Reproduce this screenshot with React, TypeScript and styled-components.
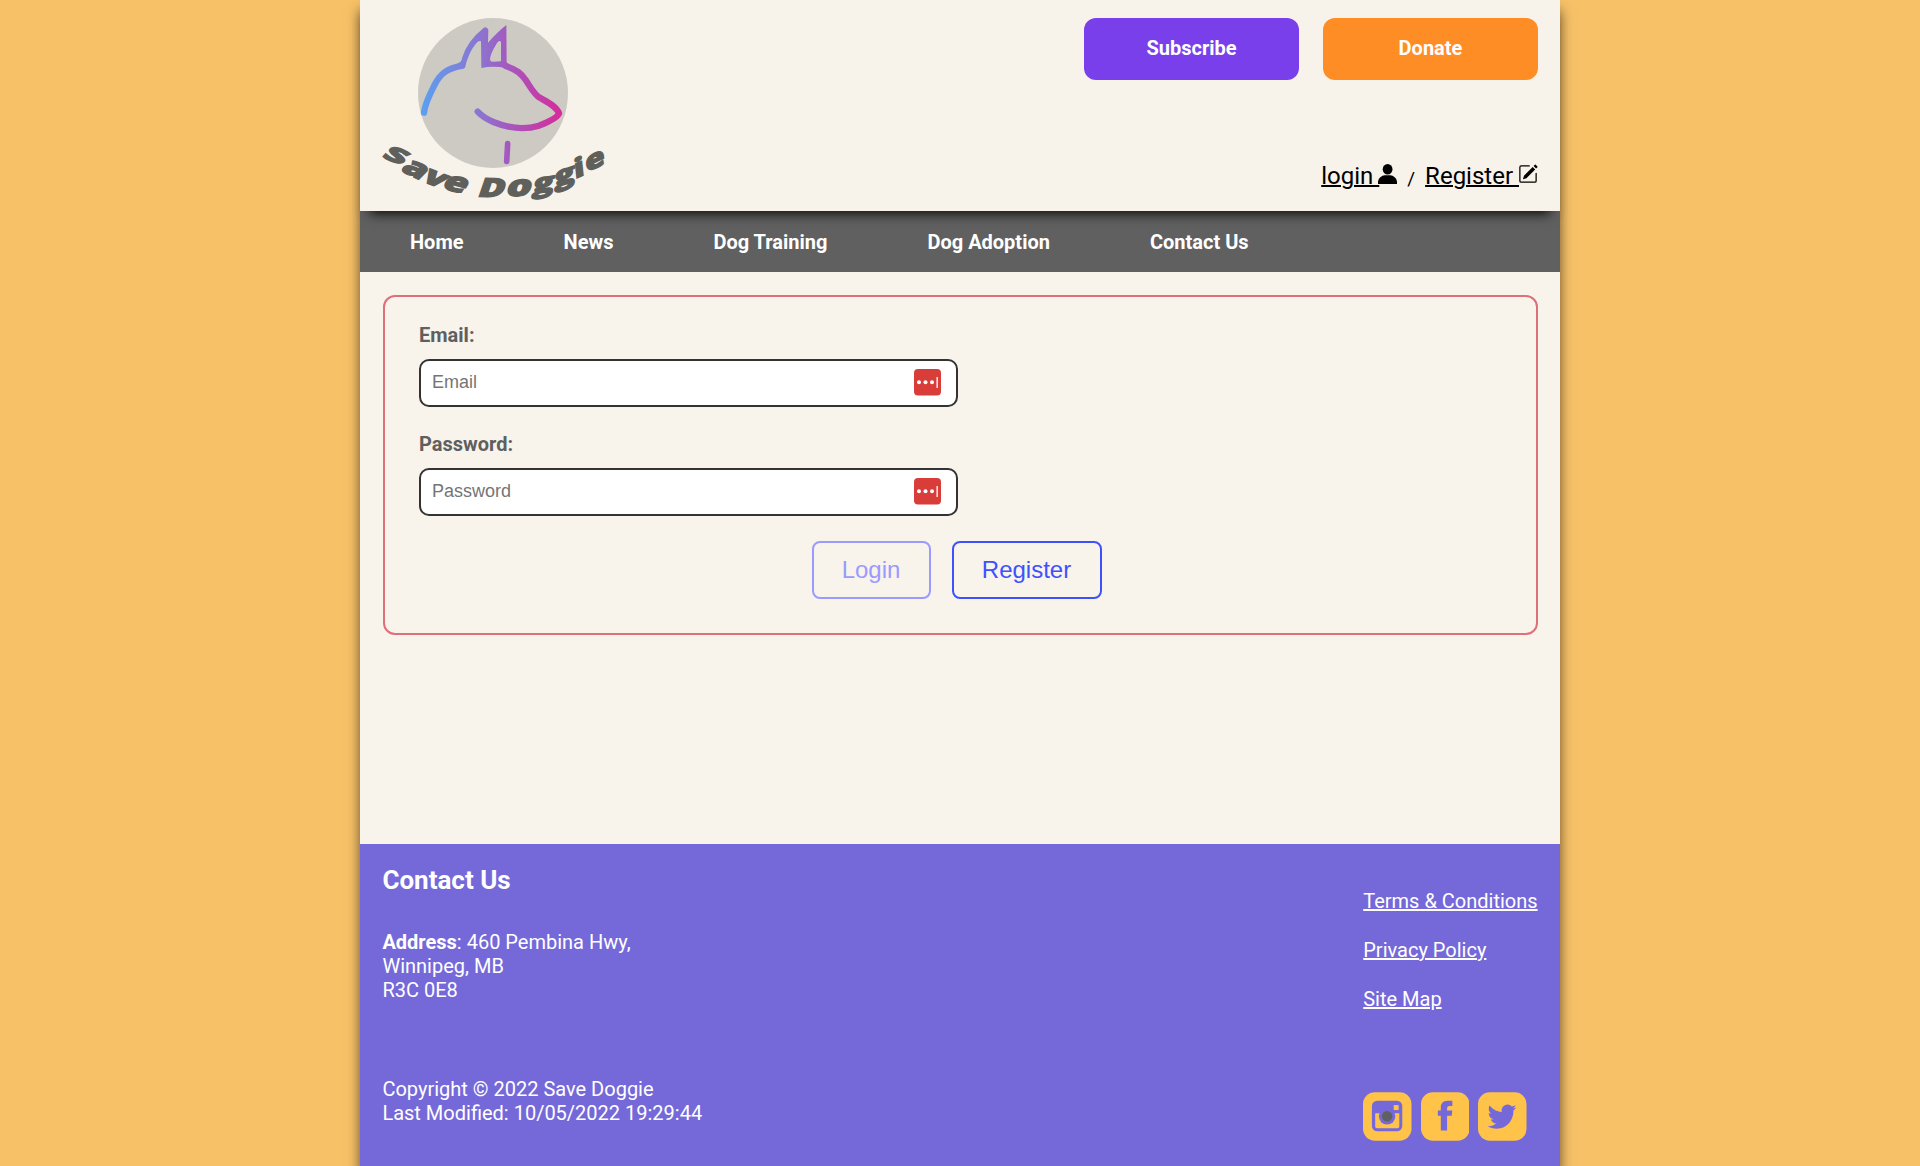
import React from "react";
import styled, { createGlobalStyle } from "styled-components";
import { BsPencilSquare } from "react-icons/bs";

const Global = createGlobalStyle`
  * { box-sizing: border-box; }
  body { margin: 0; background: #f7c168; font-family: Roboto, "Liberation Sans", sans-serif; font-size: 20px; line-height: 24px; }
  a { color: inherit; }
`;

const Page = styled.div`
  width: 1200px;
  height: 1166px;
  margin: 0 auto;
  display: flex;
  flex-direction: column;
  background: #f8f3eb;
  box-shadow: 0 10px 12px rgba(0, 0, 0, 0.6);
`;

const Header = styled.header`
  position: relative;
  z-index: 1;
  height: 211px;
  padding: 18px 22px 0;
  display: flex;
  justify-content: space-between;
  background: #f7f2ea;
  box-shadow: 0 12px 12px -10px #000;
`;

const HeaderSide = styled.div`
  display: flex;
  flex-direction: column;
  justify-content: space-between;
  align-items: flex-end;
  padding-bottom: 20px;
`;

const Actions = styled.div`
  display: flex;
  gap: 24px;
`;

const ActionButton = styled.button<{ $color: string }>`
  width: 215px;
  height: 62px;
  padding: 0 0 2px;
  border: 0;
  border-radius: 12px;
  background: ${(p) => p.$color};
  color: #fff;
  font: 700 20px Roboto, sans-serif;
`;

const Account = styled.div`
  display: flex;
  align-items: baseline;
  height: 30px;
  line-height: 30px;
`;

const AccountLink = styled.a`
  font-size: 24px;
  color: #000;
  white-space: pre;
  text-decoration-thickness: 2px;
  svg { vertical-align: baseline; margin: 0 0 0 -1px; }
`;

const Slash = styled.span`
  margin: 0 10px;
  font-size: 19px;
  transform: translateY(1px);
`;

const Nav = styled.nav`
  height: 61px;
  padding: 0 50px;
  display: flex;
  align-items: center;
  gap: 100px;
  background: #606060;
  color: #fff;
  font-weight: 700;
  a { text-decoration: none; }
`;

const Main = styled.main`
  flex: 1;
  padding: 23px 22px 0 23px;
`;

const Form = styled.form`
  height: 340px;
  padding: 26px 34px;
  border: 2px solid #df6f7b;
  border-radius: 12px;
`;

const Field = styled.div`
  height: 109px;
  display: flex;
  flex-direction: column;
  gap: 12px;
`;

const Label = styled.label`
  color: #5f5f5f;
  font-weight: 700;
`;

const InputBox = styled.div`
  width: 539px;
  height: 48px;
  padding: 0 15.5px 1px 11px;
  display: flex;
  align-items: center;
  border: 2px solid #333;
  border-radius: 10px;
  background: #fff;
`;

const Input = styled.input`
  flex: 1;
  padding: 0;
  border: 0;
  outline: 0;
  background: none;
  font: 18px "Liberation Sans", Arial, sans-serif;
  &::placeholder { color: #757575; }
`;

const Buttons = styled.div`
  display: flex;
  justify-content: center;
  gap: 21px;
  padding-right: 8px;
`;

const FormButton = styled.button<{ $color: string; $width: number }>`
  width: ${(p) => p.$width}px;
  height: 58px;
  padding: 0;
  border: 2px solid ${(p) => p.$color};
  border-radius: 8px;
  background: transparent;
  color: ${(p) => p.$color};
  font: 24px "Liberation Sans", Arial, sans-serif;
`;

const Footer = styled.footer`
  height: 322px;
  padding: 20px 22.4px 25px;
  display: flex;
  justify-content: space-between;
  background: #7569d9;
  color: #fff;
`;

const FooterColumn = styled.div`
  display: flex;
  flex-direction: column;
`;

const FooterTitle = styled.h2`
  margin: 0 0 34px;
  font-size: 26px;
  line-height: 32px;
`;

const Text = styled.p`
  margin: 0;
`;

const Copyright = styled(Text)`
  margin-top: 75px;
`;

const Links = styled.div`
  display: flex;
  flex-direction: column;
  align-items: flex-start;
  gap: 25px;
  padding-top: 25px;
`;

const Social = styled.div`
  display: flex;
  gap: 9px;
  margin-top: auto;
`;

const word: [string, number, number, number, number][] = [
  ["S", 124, 484, 24, 64],
  ["a", 180, 526, 26, 84],
  ["v", 242, 554, 21, 80],
  ["e", 306, 573, 14, 84],
  ["D", 419, 591, 1, 79],
  ["o", 502, 588, -3, 88],
  ["g", 578, 576, -9, 78],
  ["g", 644, 552, -18, 78],
  ["i", 690, 530, -24, 74],
  ["e", 738, 504, -26, 76],
];

const Logo = () => (
  <svg width="223" height="182" viewBox="96 54 669 546" overflow="visible" role="img">
    <defs>
      <linearGradient id="dog" gradientUnits="userSpaceOnUse" x1="216" y1="0" x2="636" y2="0">
        <stop offset="0" stopColor="#5b9ff0" />
        <stop offset="0.42" stopColor="#8c74d0" />
        <stop offset="0.62" stopColor="#a558bf" />
        <stop offset="1" stopColor="#d72b9a" />
      </linearGradient>
    </defs>
    <circle cx="429" cy="279" r="225" fill="#cdcac3" />
    <g fill="none" stroke="url(#dog)" strokeWidth="17" strokeLinecap="round" strokeLinejoin="round">
      <path d="M222 338C225 310 238 285 252 258C271 219 290 207 335 197" strokeWidth="19" />
      <path d="M467 198C502 209 514 222 527 240C542 263 552 282 567 292C588 304 619 317 627 340C624 351 594 366 567 377C520 391 474 384 430 366C409 357 394 347 383 335" strokeWidth="19" />
      <path d="M473 431L470 484" />
    </g>
    <path
      fill="url(#dog)"
      fillRule="evenodd"
      d="M398 86Q410 76 415 90L414 128Q442 96 469 75L470 187L478 197L467 204Q430 197 394 204L393 124Q386 119 374 136Q356 158 345 203Q337 210 326 206L324 190Q334 188 337 172Q352 123 398 86ZM453 126Q447 118 438 134Q420 163 420 179Q421 185 429 185L453 184Z"
    />
    <g fill="#5f5f5b" fontFamily="Open Sans" fontWeight="800" textAnchor="middle">
      {word.map(([ch, x, y, angle, size], i) => (
        <text
          key={i}
          fontSize={size}
          stroke="#5f5f5b"
          strokeWidth="3.5"
          transform={`translate(${x} ${y}) rotate(${angle}) skewX(-18) scale(${ch === "S" ? 1.8 : 1.36} 1)`}
        >
          {ch}
        </text>
      ))}
    </g>
  </svg>
);

const PersonIcon = () => (
  <svg width="19" height="20" viewBox="0 0 19 20">
    <ellipse cx="9.6" cy="5.2" rx="4.9" ry="5.2" />
    <path d="M0 20V18C0 14.5 4 11.3 6.6 11.3H12.4C15 11.3 19 14.5 19 18V20Z" />
  </svg>
);

const PasswordIcon = () => (
  <svg width="27" height="27" viewBox="0 0 27 27">
    <rect width="27" height="26.5" rx="4" fill="#d83d3a" />
    <g fill="#fff">
      <circle cx="5" cy="13.3" r="2" />
      <circle cx="11.5" cy="13.3" r="2" />
      <circle cx="18" cy="13.3" r="2" />
      <rect x="22.5" y="8" width="1.3" height="11" />
    </g>
  </svg>
);

const Tile = ({ children }: { children: React.ReactNode }) => (
  <svg width="48.5" height="49" viewBox="0 0 147 147">
    <rect width="147" height="147" rx="36" fill="#ffc34a" />
    {children}
  </svg>
);

export default function App() {
  return (
    <>
      <Global />
      <Page>
        <Header>
          <Logo />
          <HeaderSide>
            <Actions>
              <ActionButton $color="#793fea">Subscribe</ActionButton>
              <ActionButton $color="#ff8d26">Donate</ActionButton>
            </Actions>
            <Account>
              <AccountLink href="#">login <PersonIcon /></AccountLink>
              <Slash>/</Slash>
              <AccountLink href="#">Register <BsPencilSquare size={20} /></AccountLink>
            </Account>
          </HeaderSide>
        </Header>
        <Nav>
          {["Home", "News", "Dog Training", "Dog Adoption", "Contact Us"].map((t) => (
            <a key={t} href="#">{t}</a>
          ))}
        </Nav>
        <Main>
          <Form>
            {["Email", "Password"].map((name) => (
              <Field key={name}>
                <Label htmlFor={name}>{name}:</Label>
                <InputBox>
                  <Input id={name} placeholder={name} />
                  <PasswordIcon />
                </InputBox>
              </Field>
            ))}
            <Buttons>
              <FormButton type="button" $color="#9b9aff" $width={119}>Login</FormButton>
              <FormButton type="button" $color="#3f51ff" $width={150}>Register</FormButton>
            </Buttons>
          </Form>
        </Main>
        <Footer>
          <FooterColumn>
            <FooterTitle>Contact Us</FooterTitle>
            <Text><b>Address</b>: 460 Pembina Hwy,<br />Winnipeg, MB<br />R3C 0E8</Text>
            <Copyright>Copyright © 2022 Save Doggie<br />Last Modified: 10/05/2022 19:29:44</Copyright>
          </FooterColumn>
          <FooterColumn>
            <Links>
              <a href="#">Terms &amp; Conditions</a>
              <a href="#">Privacy Policy</a>
              <a href="#">Site Map</a>
            </Links>
            <Social>
              <Tile>
                <rect x="27" y="26" width="92" height="92" rx="16" fill="#7569d9" />
                <path d="M37 64H110V103Q110 109 104 109H43Q37 109 37 103Z" fill="#ffc34a" />
                <rect x="93" y="39" width="15" height="15" fill="#ffc34a" />
                <circle cx="73" cy="73" r="25" fill="#7569d9" />
                <circle cx="73" cy="73" r="16" fill="#606060" />
              </Tile>
              <Tile>
                <path fill="#7569d9" d="M60 116V71H51V55H60V47Q60 26 80 26H95V42H86Q79 42 79 49V55H95L93 71H79V116Z" />
              </Tile>
              <Tile>
                <path
                  fill="#7569d9"
                  transform="translate(30 27) scale(3.65 3.8)"
                  d="M23.6 4.9c-.9.4-1.8.7-2.8.8 1-.6 1.8-1.6 2.2-2.7-1 .6-2 1-3.1 1.2-.9-1-2.2-1.6-3.6-1.6-3.2 0-5.5 3-4.8 6-4.1-.2-7.7-2.2-10.1-5.1-1.3 2.2-.7 5.1 1.5 6.6-.8 0-1.6-.2-2.2-.6-.1 2.3 1.6 4.4 3.9 4.9-.7.2-1.5.2-2.2.1.6 2 2.4 3.4 4.6 3.4-2.1 1.6-4.7 2.3-7.3 2 2.2 1.4 4.8 2.2 7.5 2.2 9.1 0 14.3-7.7 14-14.6 1-.7 1.8-1.6 2.4-2.6z"
                />
              </Tile>
            </Social>
          </FooterColumn>
        </Footer>
      </Page>
    </>
  );
}
